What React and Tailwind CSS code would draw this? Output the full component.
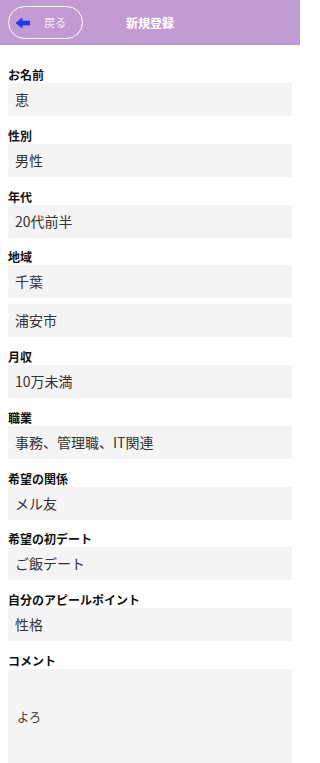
const fields = [
  { label: "お名前", values: ["恵"] },
  { label: "性別", values: ["男性"] },
  { label: "年代", values: ["20代前半"] },
  { label: "地域", values: ["千葉", "浦安市"] },
  { label: "月収", values: ["10万未満"] },
  { label: "職業", values: ["事務、管理職、IT関連"] },
  { label: "希望の関係", values: ["メル友"] },
  { label: "希望の初デート", values: ["ご飯デート"] },
  { label: "自分のアピールポイント", values: ["性格"] },
];

function Header() {
  return (
    <header className="relative h-[45px] bg-[#c39bd3] flex items-center">
      <button className="ml-[8px] w-[75px] h-[33px] rounded-full border-[1.5px] border-white flex items-center pl-[7px]">
        <svg width="14" height="10" viewBox="0 0 14 10">
          <path d="M0 5 L6 0 L6 3 L14 3 L14 7 L6 7 L6 10 Z" fill="#1b3cf5" strokeLinejoin="round" stroke="#1b3cf5" strokeWidth="0.8" />
        </svg>
        <span className="ml-[14px] text-[11px] text-[#f3ebf7]">戻る</span>
      </button>
      <h1 className="absolute left-0 right-0 text-center text-[12px] font-bold text-white pointer-events-none">
        新規登録
      </h1>
    </header>
  );
}

function Label({ children }) {
  return <div className="text-[12px] leading-[16px] font-bold text-[#111]">{children}</div>;
}

function Field({ label, values }) {
  return (
    <div className="flex flex-col">
      <Label>{label}</Label>
      <div className="flex flex-col gap-[6px]">
        {values.map((v) => (
          <div key={v} className="h-[33px] bg-[#f4f4f4] flex items-center pl-[7px] text-[14px] text-[#333]">
            {v}
          </div>
        ))}
      </div>
    </div>
  );
}

export default function App() {
  return (
    <div
      className="w-[300px] min-h-[763px] bg-white"
      style={{ fontFamily: '"Noto Sans CJK JP", "Noto Sans", sans-serif' }}
    >
      <Header />
      <main className="px-[8px] pt-[22px] flex flex-col gap-[11.75px]">
        {fields.map((f) => (
          <Field key={f.label} {...f} />
        ))}
        <div className="flex flex-col">
          <Label>コメント</Label>
          <div className="h-[96px] bg-[#f4f4f4] flex items-center pl-[9px] text-[12px] text-[#333]">
            よろ
          </div>
        </div>
      </main>
    </div>
  );
}
